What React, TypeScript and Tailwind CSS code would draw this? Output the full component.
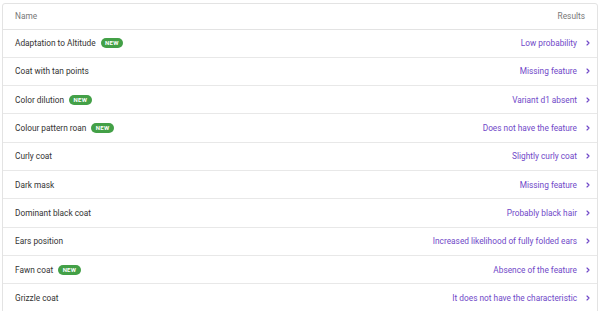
import { ChevronRight } from "lucide-react";

interface Trait {
  name: string;
  result: string;
  isNew?: boolean;
}

const traits: Trait[] = [
  { name: "Adaptation to Altitude", result: "Low probability", isNew: true },
  { name: "Coat with tan points", result: "Missing feature" },
  { name: "Color dilution", result: "Variant d1 absent", isNew: true },
  { name: "Colour pattern roan", result: "Does not have the feature", isNew: true },
  { name: "Curly coat", result: "Slightly curly coat" },
  { name: "Dark mask", result: "Missing feature" },
  { name: "Dominant black coat", result: "Probably black hair" },
  { name: "Ears position", result: "Increased likelihood of fully folded ears" },
  { name: "Fawn coat", result: "Absence of the feature", isNew: true },
  { name: "Grizzle coat", result: "It does not have the characteristic" },
];

export default function App() {
  return (
    <div className="h-[311px] overflow-hidden bg-white px-[2px] pt-[3px] font-['Roboto',sans-serif]">
      <div className="rounded-t-[3px] border border-[#e3e3e3]">
        <div className="flex h-[25.5px] items-center justify-between border-b border-[#e3e3e3] pl-3 pr-[12px] text-[8.3px] text-[#777]">
          <span>Name</span>
          <span>Results</span>
        </div>
        {traits.map((t) => (
          <div
            key={t.name}
            className="flex h-[28.33px] items-center justify-between border-b border-[#e8e8e8] pl-3 pr-[5px] text-[8.3px]"
          >
            <div className="flex items-center gap-[5px] text-[#333]">
              <span>{t.name}</span>
              {t.isNew && (
                <span className="rounded-full bg-[#43a047] px-[4.5px] py-[1.5px] text-[6px] font-bold leading-[6.5px] tracking-[0.04em] text-white">
                  NEW
                </span>
              )}
            </div>
            <div className="flex items-center gap-[7px] text-[#7048c8]">
              <span>{t.result}</span>
              <ChevronRight className="h-[8px] w-[8px]" strokeWidth={3.5} />
            </div>
          </div>
        ))}
      </div>
    </div>
  );
}
